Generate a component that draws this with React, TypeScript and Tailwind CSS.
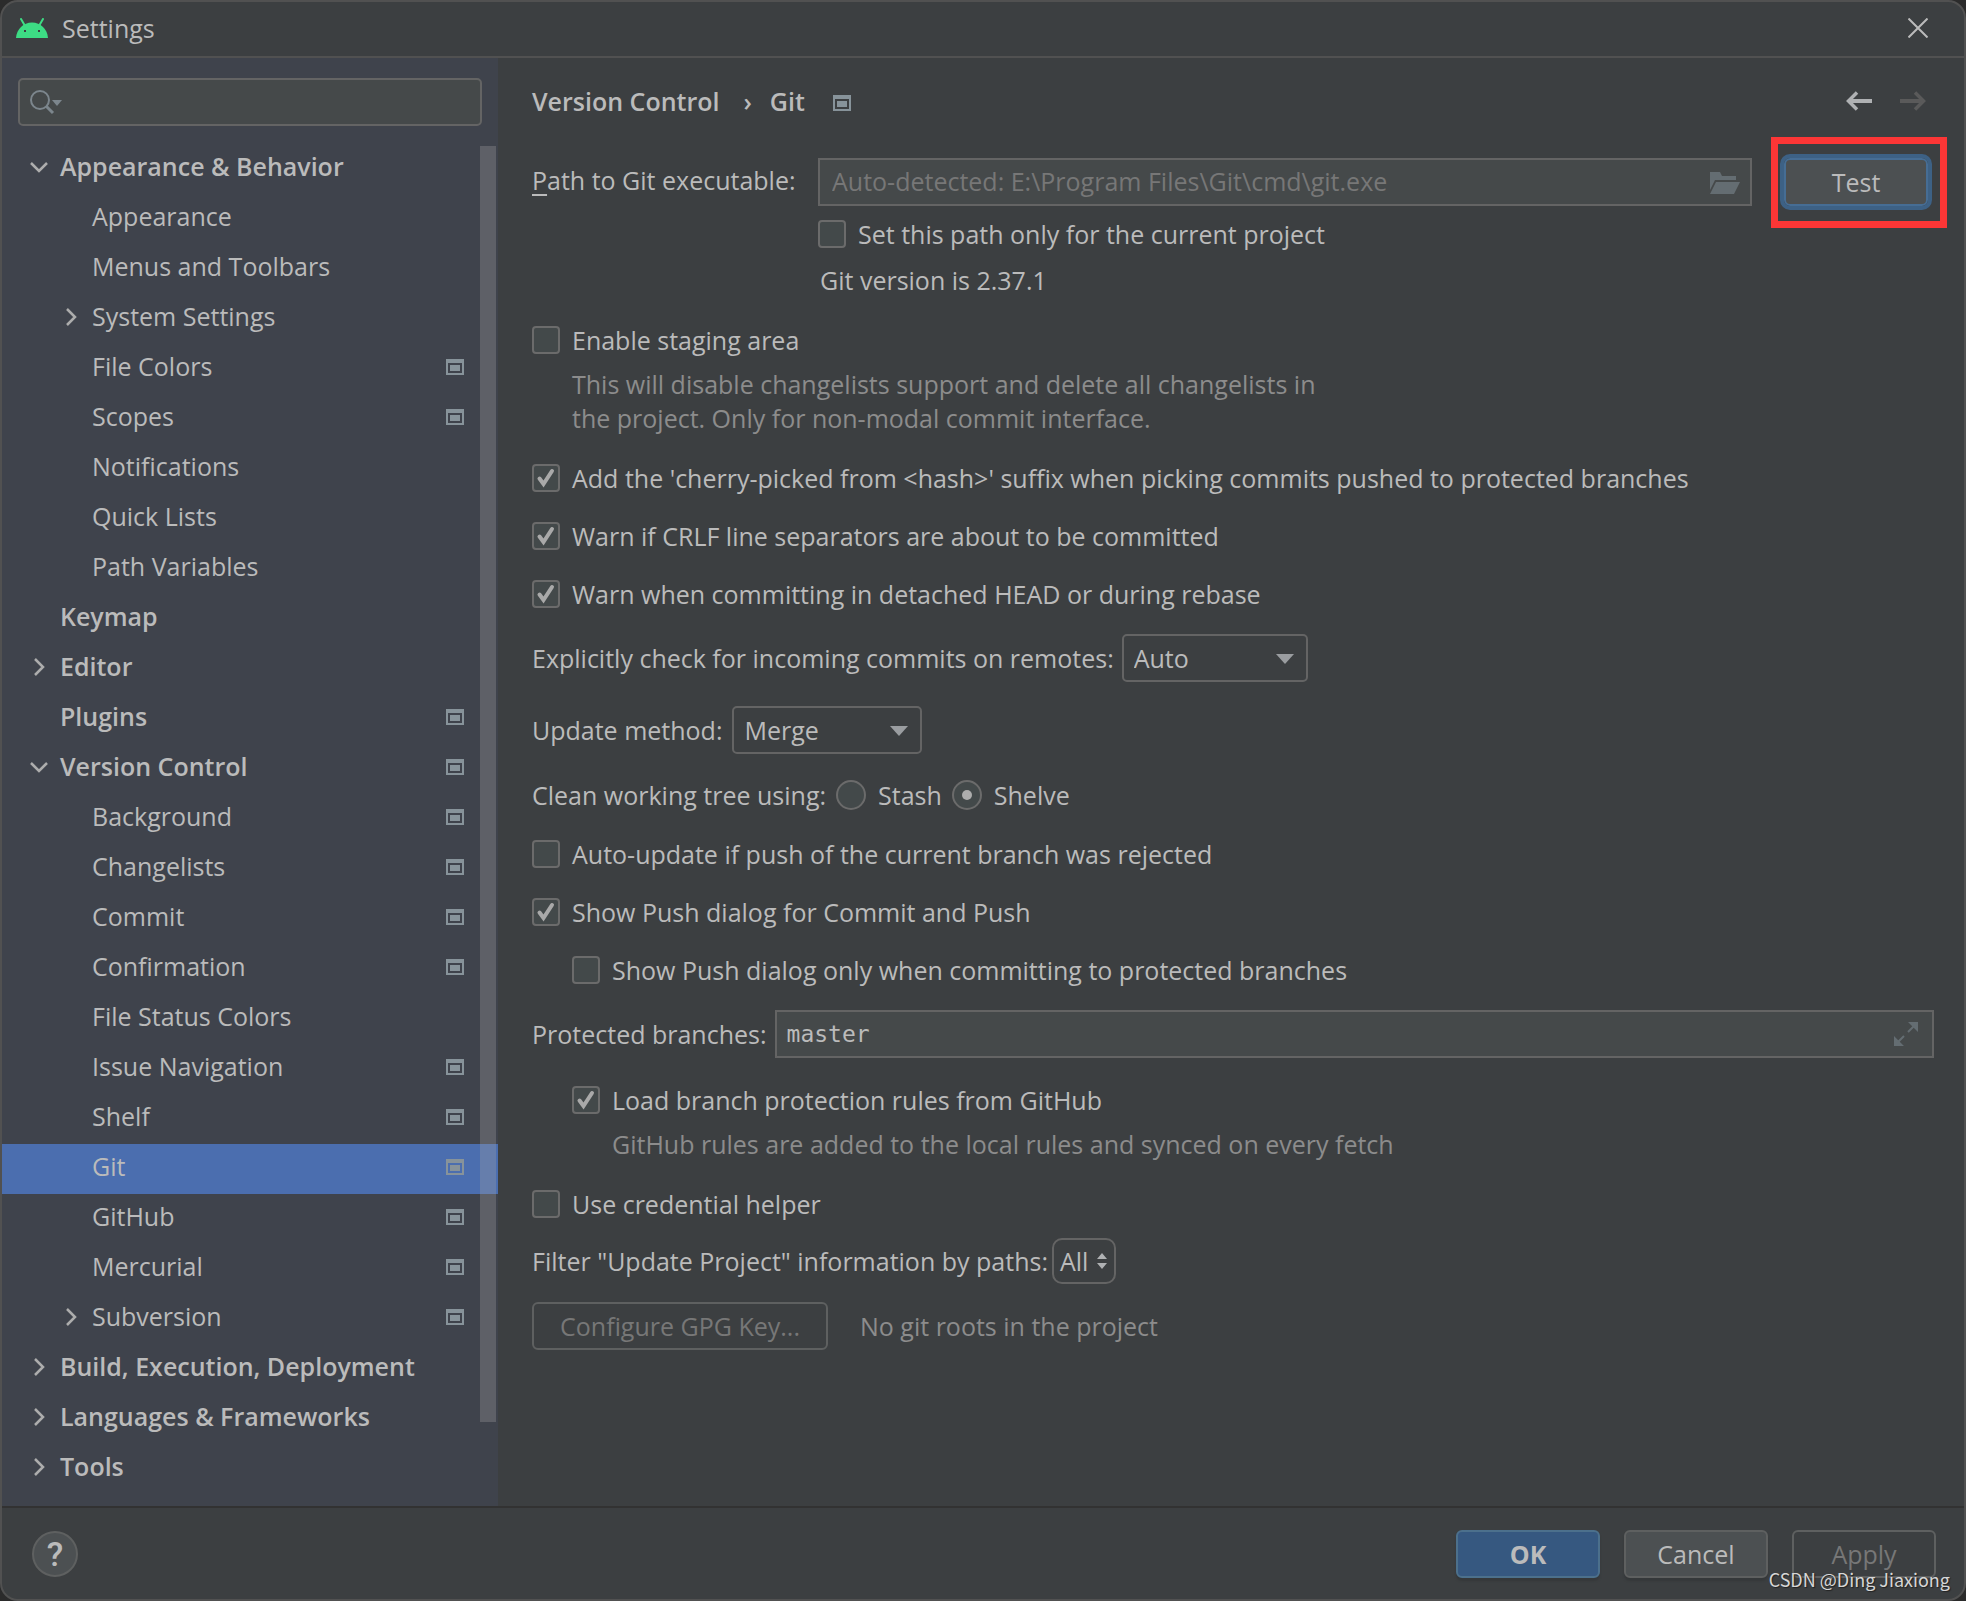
import { useState, type ReactNode } from 'react';

interface TreeItem {
  label: string;
  level: 0 | 1;
  arrow?: 'open' | 'closed';
  marker?: boolean;
}

const treeItems: TreeItem[] = [
  { label: 'Appearance & Behavior', level: 0, arrow: 'open' },
  { label: 'Appearance', level: 1 },
  { label: 'Menus and Toolbars', level: 1 },
  { label: 'System Settings', level: 1, arrow: 'closed' },
  { label: 'File Colors', level: 1, marker: true },
  { label: 'Scopes', level: 1, marker: true },
  { label: 'Notifications', level: 1 },
  { label: 'Quick Lists', level: 1 },
  { label: 'Path Variables', level: 1 },
  { label: 'Keymap', level: 0 },
  { label: 'Editor', level: 0, arrow: 'closed' },
  { label: 'Plugins', level: 0, marker: true },
  { label: 'Version Control', level: 0, arrow: 'open', marker: true },
  { label: 'Background', level: 1, marker: true },
  { label: 'Changelists', level: 1, marker: true },
  { label: 'Commit', level: 1, marker: true },
  { label: 'Confirmation', level: 1, marker: true },
  { label: 'File Status Colors', level: 1 },
  { label: 'Issue Navigation', level: 1, marker: true },
  { label: 'Shelf', level: 1, marker: true },
  { label: 'Git', level: 1, marker: true },
  { label: 'GitHub', level: 1, marker: true },
  { label: 'Mercurial', level: 1, marker: true },
  { label: 'Subversion', level: 1, arrow: 'closed', marker: true },
  { label: 'Build, Execution, Deployment', level: 0, arrow: 'closed' },
  { label: 'Languages & Frameworks', level: 0, arrow: 'closed' },
  { label: 'Tools', level: 0, arrow: 'closed' },
];

function AndroidIcon() {
  return (
    <svg width="32" height="20" viewBox="0 0 32 20" aria-hidden="true">
      <path d="M0 20C.6 11 7.400 4.500 16 4.500S31.400 11 32 20Z" fill="#3ddc84" />
      <path d="M5 1l3.500 6M27 1l-3.500 6" stroke="#3ddc84" strokeWidth="2" strokeLinecap="round" />
      <path d="M8 12h2v2H8zM22 12h2v2h-2z" fill="#3c3f41" />
    </svg>
  );
}

// Marks settings that are stored per project
function ProjectMarker() {
  return (
    <svg width="18" height="16" viewBox="0 0 18 16" className="shrink-0" aria-hidden="true">
      <path fillRule="evenodd" d="M0 0h18v16H0zM2 4v10h14V4z" fill="#87939a" />
      <path d="M4 6h10v6H4z" fill="#87939a" />
    </svg>
  );
}

function TreeArrow({ state }: { state?: 'open' | 'closed' }) {
  return (
    <svg width="20" height="20" viewBox="0 0 20 20" fill="none" stroke="#adadad" strokeWidth="2.500" className="shrink-0" aria-hidden="true">
      {state === 'open' && <path d="M5 6l8 8 8-8" transform="translate(-2)" />}
      {state === 'closed' && <path d="M7 2l8 8-8 8" />}
    </svg>
  );
}

interface CheckProps {
  label: string;
  defaultChecked?: boolean;
  className?: string;
}

function Check({ label, defaultChecked, className = '' }: CheckProps) {
  return (
    <label className={`flex h-7 w-fit items-center gap-3 ${className}`}>
      <span className="relative size-7 shrink-0">
        <input
          type="checkbox"
          defaultChecked={defaultChecked}
          className="peer block size-7 appearance-none rounded-[4px] border-2 border-[#6b6b6b] bg-[#43494a]"
        />
        <svg viewBox="0 0 28 28" fill="none" className="pointer-events-none absolute inset-0 hidden size-7 peer-checked:block" aria-hidden="true">
          <path d="M7.500 14.500l4 5.500L20 7" stroke="#a9a9a9" strokeWidth="4" strokeLinecap="round" />
        </svg>
      </span>
      <span className="whitespace-nowrap">{label}</span>
    </label>
  );
}

function Radio({ label, defaultChecked }: CheckProps) {
  return (
    <label className="flex items-center gap-3">
      <span className="relative size-[30px] shrink-0">
        <input
          type="radio"
          name="clean-tree"
          defaultChecked={defaultChecked}
          className="peer block size-[30px] appearance-none rounded-full border-2 border-[#6b6b6b] bg-[#43494a]"
        />
        <span className="pointer-events-none absolute inset-[10px] hidden rounded-full bg-[#adadad] peer-checked:block" />
      </span>
      {label}
    </label>
  );
}

function Dropdown({ id, value, options, className }: { id: string; value: string; options: string[]; className: string }) {
  return (
    <div className={`relative h-12 ${className}`}>
      <select id={id} defaultValue={value} className="size-full appearance-none rounded-[5px] border-2 border-[#646464] bg-[#3c3f41] pl-2.5">
        {options.map((option) => (
          <option key={option}>{option}</option>
        ))}
      </select>
      <svg width="18" height="10" viewBox="0 0 18 10" className="pointer-events-none absolute top-5 right-3.5" aria-hidden="true">
        <path d="M0 0h18l-9 10z" fill="#9a9da0" />
      </svg>
    </div>
  );
}

function DialogButton({ children, className, disabled }: { children: ReactNode; className: string; disabled?: boolean }) {
  return (
    <button type="button" disabled={disabled} className={`h-12 w-36 rounded-[6px] border-2 ${className}`}>
      {children}
    </button>
  );
}

function Sidebar() {
  const [selected, setSelected] = useState('Git');

  return (
    <aside className="relative w-[496px] shrink-0 bg-[#3f434c] pt-5 pb-3">
      <div className="relative mx-4 h-12 w-[464px]">
        <input type="text" aria-label="Search settings" className="size-full rounded-[5px] border-2 border-[#646464] bg-[#45494a] pl-14" />
        <svg width="34" height="26" viewBox="0 0 34 26" fill="none" className="pointer-events-none absolute top-[11px] left-3" aria-hidden="true">
          <circle cx="10" cy="11" r="9" stroke="#7c868d" strokeWidth="2" />
          <path d="M16 17l7 7" stroke="#7c868d" strokeWidth="3" />
          <path d="M22 11h10l-5 6z" fill="#7c868d" />
        </svg>
      </div>
      <ul className="mt-[18px]">
        {treeItems.map((item) => (
          <li key={item.label}>
            <button
              type="button"
              onClick={() => setSelected(item.label)}
              className={`flex h-[50px] w-full items-center gap-3 pr-[34px] pb-1 text-left whitespace-nowrap ${
                item.level === 0 ? 'pl-[26px] font-semibold' : 'pl-[58px]'
              } ${selected === item.label ? 'bg-[#4b6eaf]' : ''}`}
            >
              <TreeArrow state={item.arrow} />
              <span className="grow pb-0.5">{item.label}</span>
              {item.marker && <ProjectMarker />}
            </button>
          </li>
        ))}
      </ul>
      <div className="absolute top-[88px] right-0.5 bottom-[84px] w-4 bg-[#a6a6a6]/30" />
    </aside>
  );
}

function GitSettings() {
  return (
    <main className="min-w-0 grow pt-[18px] pr-[30px] pl-[34px]">
      <div className="flex h-[50px] items-center justify-between">
        <div className="flex items-center font-semibold">
          <span>Version Control</span>
          <span className="mr-[18px] ml-6">›</span>
          <span className="mr-7">Git</span>
          <span className="pt-1">
            <ProjectMarker />
          </span>
        </div>
        <div className="mr-2 flex gap-7">
          <button type="button" aria-label="Back">
            <svg width="26" height="20" viewBox="0 0 26 20" fill="none" stroke="#afb1b3" aria-hidden="true">
              <path d="M26 10H4" strokeWidth="4" />
              <path d="M11 1.500L2.500 10l8.500 8.500" strokeWidth="3.500" />
            </svg>
          </button>
          <button type="button" aria-label="Forward" disabled>
            <svg width="26" height="20" viewBox="0 0 26 20" fill="none" stroke="#5a5a5a" aria-hidden="true">
              <path d="M0 10h22" strokeWidth="4" />
              <path d="M15 1.500l8.500 8.500-8.500 8.500" strokeWidth="3.500" />
            </svg>
          </button>
        </div>
      </div>

      <div className="mt-8 flex h-12">
        <label htmlFor="git-path" className="w-[286px] shrink-0 pt-[5px]">
          <span className="underline decoration-2 underline-offset-4">P</span>ath to Git executable:
        </label>
        <div className="relative grow">
          <input
            id="git-path"
            type="text"
            placeholder="Auto-detected: E:\Program Files\Git\cmd\git.exe"
            className="size-full border-2 border-[#646464] bg-[#45494a] pr-16 pb-0.5 pl-3 placeholder:text-[#777777]"
          />
          <svg width="30" height="22" viewBox="0 0 30 22" className="pointer-events-none absolute top-[14px] right-3" aria-hidden="true">
            <path d="M0 0h10l2 4h14v4H5L0 18z" fill="#646d72" />
            <path d="M6 10h24l-6 12H0z" fill="#646d72" />
          </svg>
        </div>
        <div className="relative mr-1.5 ml-8 w-36">
          <button type="button" className="size-full rounded-[6px] border-2 border-[#466d94] bg-[#4c5052] outline-4 outline-[#3d6185]">
            Test
          </button>
          <div className="pointer-events-none absolute -top-[21px] -right-[19px] -bottom-[22px] -left-[13px] border-7 border-[#fc3636]" />
        </div>
      </div>
      <Check label="Set this path only for the current project" className="mt-[14px] ml-[286px]" />
      <p className="mt-[15px] ml-[288px]">Git version is 2.37.1</p>

      <Check label="Enable staging area" className="mt-[29px]" />
      <p className="mt-[13px] ml-10 text-[#8c8c8c]">
        This will disable changelists support and delete all changelists in
        <br />
        the project. Only for non-modal commit interface.
      </p>
      <Check defaultChecked label="Add the 'cherry-picked from <hash>' suffix when picking commits pushed to protected branches" className="mt-[29px]" />
      <Check defaultChecked label="Warn if CRLF line separators are about to be committed" className="mt-[30px]" />
      <Check defaultChecked label="Warn when committing in detached HEAD or during rebase" className="mt-[30px]" />

      <div className="mt-[26px] flex items-center">
        <label htmlFor="incoming" className="mr-2">Explicitly check for incoming commits on remotes:</label>
        <Dropdown id="incoming" value="Auto" options={['Auto', 'Always', 'Never']} className="w-[186px]" />
      </div>
      <div className="mt-6 flex items-center">
        <label htmlFor="update-method" className="mr-2.5">Update method:</label>
        <Dropdown id="update-method" value="Merge" options={['Merge', 'Rebase']} className="w-[190px]" />
      </div>
      <div role="radiogroup" aria-label="Clean working tree using" className="mt-[26px] flex h-[30px] items-center gap-2.5">
        <span>Clean working tree using:</span>
        <Radio label="Stash" />
        <Radio label="Shelve" defaultChecked />
      </div>
      <Check label="Auto-update if push of the current branch was rejected" className="mt-[30px]" />
      <Check defaultChecked label="Show Push dialog for Commit and Push" className="mt-[30px]" />
      <Check label="Show Push dialog only when committing to protected branches" className="mt-[30px] ml-10" />

      <div className="mt-[26px] flex h-12 items-center">
        <label htmlFor="branches" className="mr-2">Protected branches:</label>
        <div className="relative h-full grow">
          <input
            id="branches"
            type="text"
            defaultValue="master"
            className="size-full border-2 border-[#646464] bg-[#45494a] pl-2.5 font-['DejaVu_Sans_Mono',monospace] text-[23px]"
          />
          <svg width="24" height="24" viewBox="0 0 24 24" className="pointer-events-none absolute top-3 right-4" fill="#646d72" aria-hidden="true">
            <path d="M14 0h10v10zM0 14v10h10z" />
            <path d="M20 4l-6 6M10 14l-6 6" stroke="#646d72" strokeWidth="2" />
          </svg>
        </div>
      </div>
      <Check defaultChecked label="Load branch protection rules from GitHub" className="mt-7 ml-10" />
      <p className="mt-[13px] ml-20 text-[#8c8c8c]">GitHub rules are added to the local rules and synced on every fetch</p>
      <Check label="Use credential helper" className="mt-[29px]" />

      <div className="mt-5 flex h-[46px] items-center gap-1">
        <span>Filter "Update Project" information by paths:</span>
        <button type="button" className="flex h-full items-center gap-2 rounded-[10px] border-2 border-[#646464] px-1.5">
          All
          <svg width="12" height="18" viewBox="0 0 12 18" fill="#afb1b3" aria-hidden="true">
            <path d="M1 7l5-6 5 6zM1 11l5 6 5-6z" />
          </svg>
        </button>
      </div>
      <div className="mt-[18px] flex items-center gap-8">
        <button type="button" disabled className="h-12 w-[296px] rounded-[6px] border-2 border-[#5e6060] text-[#777777]">
          Configure GPG Key...
        </button>
        <span className="text-[#8c8c8c]">No git roots in the project</span>
      </div>
    </main>
  );
}

export default function App() {
  return (
    <div className="relative bg-[#2b2b2b] font-['Open_Sans','Noto_Sans',sans-serif] text-[25px] leading-[34px] text-[#bbbbbb]">
      <div className="flex min-h-screen flex-col overflow-hidden rounded-[18px] border-2 border-[#515151] bg-[#3c3f41]">
        <header className="flex h-14 items-center border-b-2 border-[#515151] pr-9 pb-0.5 pl-3.5">
          <AndroidIcon />
          <h1 className="ml-3.5 grow">Settings</h1>
          <button type="button" aria-label="Close">
            <svg width="20" height="20" viewBox="0 0 20 20" stroke="#bbbbbb" strokeWidth="2" aria-hidden="true">
              <path d="M.5.5l19 19M19.500.5l-19 19" />
            </svg>
          </button>
        </header>
        <div className="flex grow">
          <Sidebar />
          <GitSettings />
        </div>
        <footer className="flex h-[93px] items-center gap-6 border-t-2 border-[#323232] pr-7 pl-[30px]">
          <button
            type="button"
            aria-label="Help"
            className="mr-auto size-[46px] rounded-full border-2 border-[#5e6060] bg-[#4c5052] font-['Roboto',sans-serif] text-[34px] font-medium"
          >
            ?
          </button>
          <DialogButton className="border-[#4c708c] bg-[#365880] font-bold shadow-[0_3px_2px_#35383a]">OK</DialogButton>
          <DialogButton className="border-[#5e6060] bg-[#4c5052] shadow-[0_3px_2px_#35383a]">Cancel</DialogButton>
          <DialogButton disabled className="border-[#5e6060] text-[#777777]">Apply</DialogButton>
        </footer>
      </div>
      <span className="absolute right-4 bottom-2 font-['Noto_Sans_CJK_SC',sans-serif] text-[18px] leading-7 text-[#d6d6d6] [text-shadow:1px_1px_1px_#222222]">
        CSDN @Ding Jiaxiong
      </span>
    </div>
  );
}
